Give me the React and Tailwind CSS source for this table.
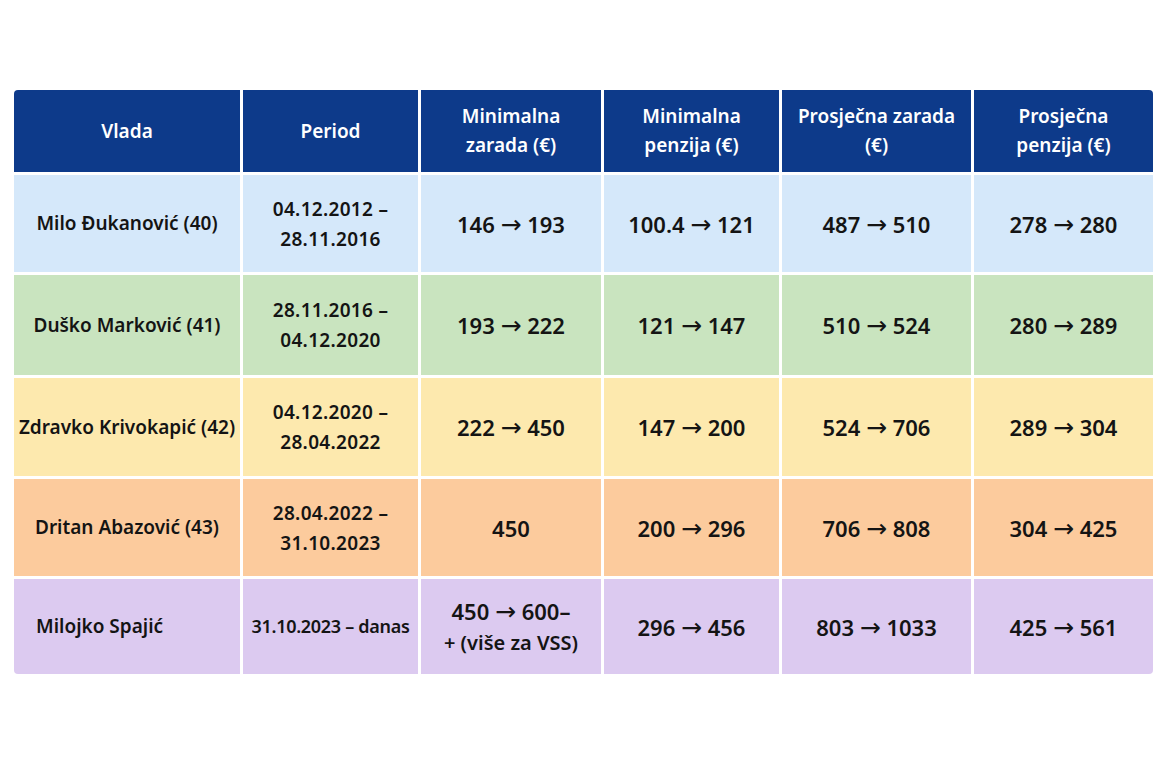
const headers = [
  ["Vlada"],
  ["Period"],
  ["Minimalna", "zarada (€)"],
  ["Minimalna", "penzija (€)"],
  ["Prosječna zarada", "(€)"],
  ["Prosječna", "penzija (€)"],
];

const rows = [
  {
    bg: "bg-[#d5e8fa]",
    h: "h-[97px]",
    name: "Milo Đukanović (40)",
    period: ["04.12.2012 –", "28.11.2016"],
    vals: [["146 → 193"], ["100.4 → 121"], ["487 → 510"], ["278 → 280"]],
  },
  {
    bg: "bg-[#c9e4bf]",
    h: "h-[100px]",
    name: "Duško Marković (41)",
    period: ["28.11.2016 –", "04.12.2020"],
    vals: [["193 → 222"], ["121 → 147"], ["510 → 524"], ["280 → 289"]],
  },
  {
    bg: "bg-[#fde9ae]",
    h: "h-[98px]",
    name: "Zdravko Krivokapić (42)",
    period: ["04.12.2020 –", "28.04.2022"],
    vals: [["222 → 450"], ["147 → 200"], ["524 → 706"], ["289 → 304"]],
  },
  {
    bg: "bg-[#fccb9d]",
    h: "h-[97px]",
    name: "Dritan Abazović (43)",
    period: ["28.04.2022 –", "31.10.2023"],
    vals: [["450"], ["200 → 296"], ["706 → 808"], ["304 → 425"]],
  },
  {
    bg: "bg-[#dccaf0]",
    h: "h-[95px]",
    name: "Milojko Spajić",
    left: true,
    small: true,
    period: ["31.10.2023 – danas"],
    vals: [["450 → 600–", "+ (više za VSS)"], ["296 → 456"], ["803 → 1033"], ["425 → 561"]],
  },
];

const cols = "grid grid-cols-[226px_175px_180px_175px_189px_179px] gap-x-[3px]";

// the arrow glyph in Noto Sans is tiny, so it is set in DejaVu
function Val({ text }) {
  const parts = text.split("→");
  if (parts.length < 2) return <>{text}</>;
  return (
    <>
      {parts[0]}
      <span
        className="font-normal text-[25px] leading-none"
        style={{ fontFamily: '"DejaVu Sans", sans-serif' }}
      >
        →
      </span>
      {parts[1]}
    </>
  );
}

export default function App() {
  return (
    <div
      className="w-[1170px] h-[780px] bg-white pt-[90px] pl-[14px]"
      style={{ fontFamily: '"Noto Sans", "Open Sans", sans-serif' }}
    >
      <div className="w-[1139px] flex flex-col gap-y-[3px] rounded-[4px] overflow-hidden">
        {/* Header */}
        <div className={cols}>
          {headers.map((lines, i) => (
            <div
              key={i}
              className="h-[82px] bg-[#0d3a8a] text-white font-semibold text-[19px] leading-[29px] flex flex-col items-center justify-center text-center"
            >
              {lines.map((l, j) => (
                <span key={j}>{l}</span>
              ))}
            </div>
          ))}
        </div>

        {/* Rows */}
        {rows.map((r, i) => (
          <div key={i} className={cols}>
            <div
              className={`${r.bg} ${r.h} flex items-center text-[19px] font-semibold text-[#141414] ${
                r.left ? "justify-start pl-[22px]" : "justify-center"
              }`}
            >
              {r.name}
            </div>
            <div
              className={`${r.bg} ${r.h} flex flex-col items-center justify-center text-[#141414] font-semibold ${
                r.small ? "text-[18px] tracking-[-0.3px]" : "text-[19px] leading-[30px] tracking-[0.3px]"
              }`}
            >
              {r.period.map((l, j) => (
                <span key={j}>{l}</span>
              ))}
            </div>
            {r.vals.map((v, j) => (
              <div
                key={j}
                className={`${r.bg} ${r.h} flex flex-col items-center justify-center text-[#141414] font-semibold ${
                  v.length > 1 ? "leading-[32px]" : "text-[22px] leading-[30px]"
                }`}
              >
                {v.map((l, k) => (
                  <span key={k} className={v.length > 1 ? (k === 0 ? "text-[22px]" : "text-[20px]") : ""}>
                    <Val text={l} />
                  </span>
                ))}
              </div>
            ))}
          </div>
        ))}
      </div>
    </div>
  );
}
